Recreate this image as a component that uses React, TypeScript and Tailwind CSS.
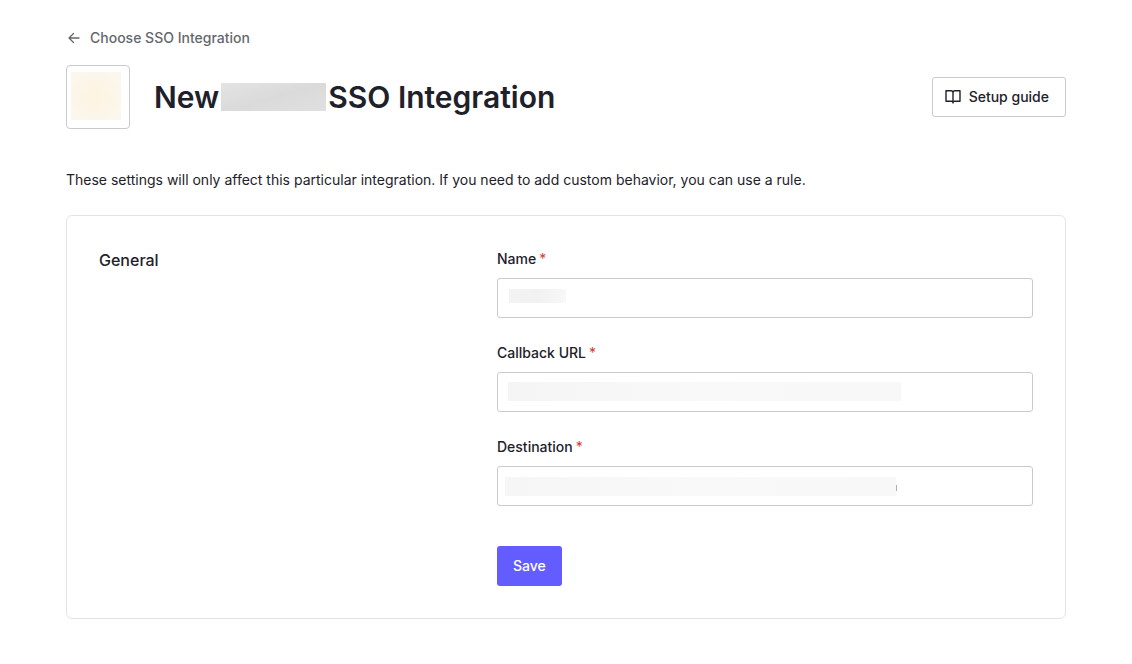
import React from "react";

function Field({ id, label, children }: { id: string; label: string; children: React.ReactNode }) {
  return (
    <div>
      <label htmlFor={id} className="flex h-[22px] items-center gap-[3px] text-sm font-medium">
        {label}
        <span className="font-normal text-[#d03c38]">*</span>
      </label>
      <div className="relative mt-2">
        <input
          id={id}
          type="text"
          className="block h-10 w-full rounded-[3px] border border-[#c9cace] bg-white px-3 text-sm outline-none focus:border-[#635dff]"
        />
        {children}
      </div>
    </div>
  );
}

export default function App() {
  return (
    <main className="min-h-screen bg-white px-[66px] pt-7 pb-11 font-['Inter',sans-serif] text-[#1e212a]">
      <a href="#" className="flex h-5 w-fit items-center gap-2 text-sm font-medium text-[#65676e]">
        <svg width="16" height="16" viewBox="0 0 16 16" fill="none" stroke="currentColor" strokeWidth="1.3" strokeLinecap="round" strokeLinejoin="round" aria-hidden="true">
          <path d="M13 8H3M7.5 3.5L3 8l4.5 4.500" />
        </svg>
        Choose SSO Integration
      </a>

      <header className="mt-[17px] flex items-center justify-between">
        <div className="flex items-center gap-6">
          <div className="size-16 rounded border border-[#c9cace] px-1 py-1.5">
            <div className="h-12 w-[50px] bg-radial from-[#fdf3df] to-[#fbf8f1]" />
          </div>
          <h1 className="flex items-center gap-0.5 text-3xl font-semibold">
            New
            <span className="h-7 w-[105px] bg-linear-to-br from-[#e4e4e4] via-[#dadadb] to-[#e0e0e1]" />
            SSO Integration
          </h1>
        </div>
        <button type="button" className="flex h-10 items-center gap-2 rounded-[3px] border border-[#c9cace] pr-4 pl-3 text-sm font-medium">
          <svg width="16" height="16" viewBox="0 0 16 16" fill="none" stroke="currentColor" strokeWidth="1.4" strokeLinejoin="round" aria-hidden="true">
            <path d="M8 3.700C8 2.500 7.200 1.700 6 1.700H1V12.300h5.500c.9 0 1.500.6 1.500 1.500 0-.9.600-1.500 1.500-1.500H15V1.700h-5C8.800 1.700 8 2.500 8 3.700zM8 3.700V14.500" />
          </svg>
          Setup guide
        </button>
      </header>

      <p className="mt-[41px] text-sm">
        These settings will only affect this particular integration. If you need to add custom behavior, you can use a rule.
      </p>

      <section className="mt-[25px] grid grid-cols-[366fr_536fr] gap-8 rounded-md border border-[#e3e4e6] p-8">
        <h2 className="text-base font-medium">General</h2>
        <form className="flex flex-col gap-6">
          <Field id="name" label="Name">
            <span className="absolute top-[11px] left-3 h-3.5 w-[57px] bg-linear-to-r from-[#f3f3f3] via-[#f1f1f1] to-[#f8f8f8]" />
          </Field>
          <Field id="callback" label="Callback URL">
            <span className="absolute top-2.5 left-[11px] h-[19px] w-[393px] bg-linear-to-r from-[#f5f5f5] via-[#f9f9f9] to-[#f8f8f8]" />
          </Field>
          <Field id="destination" label="Destination">
            <span className="absolute top-[11px] left-2 h-[19px] w-[391px] bg-linear-to-r from-[#f6f6f6] via-[#f9f9f9] to-[#f8f8f8]" />
            <span className="absolute top-[19px] left-[399px] h-1.5 w-px bg-[#b0b0b4]" />
          </Field>
          <button type="submit" className="mt-4 h-10 w-fit rounded-[3px] bg-[#635dff] px-4 text-sm font-medium text-white">
            Save
          </button>
        </form>
      </section>
    </main>
  );
}
